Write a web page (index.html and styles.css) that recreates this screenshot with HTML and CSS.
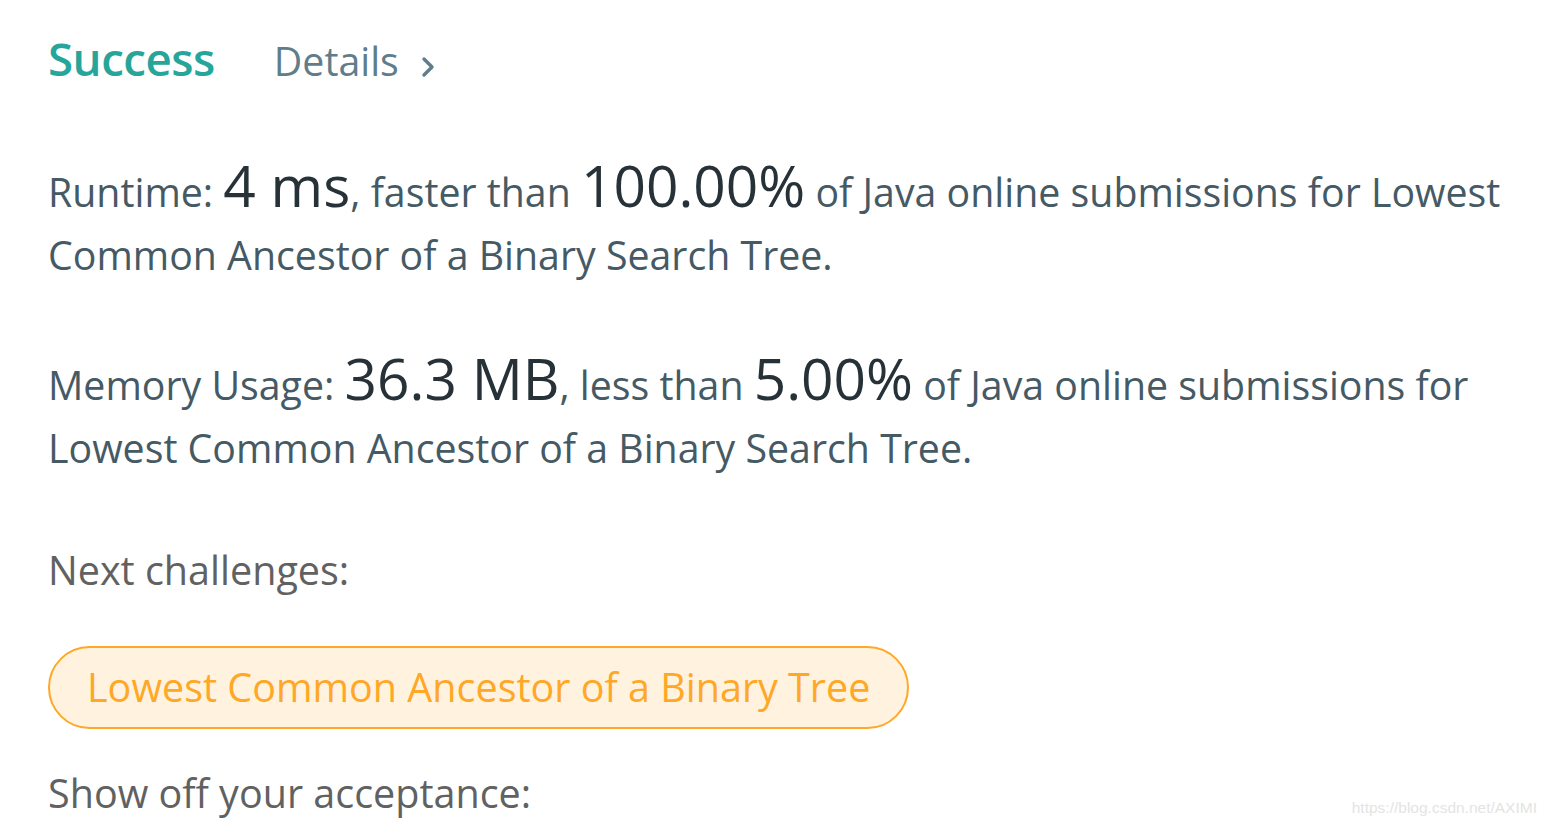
FILE: index.html
```html
<!DOCTYPE html>
<html lang="en">
<head>
<meta charset="utf-8">
<title>Success</title>
<link rel="stylesheet" href="styles.css">
</head>
<body>
<div class="page">
  <div class="result-head">
    <span class="status">Success</span>
    <a class="details" href="#">Details
      <svg class="chev" viewBox="0 0 14 22" width="14" height="22" aria-hidden="true"><path d="M3 3 L11 11 L3 19" fill="none" stroke="currentColor" stroke-width="3.4" stroke-linecap="round" stroke-linejoin="round"/></svg>
    </a>
  </div>

  <p class="stat">Runtime: <span class="big">4 ms</span>, faster than <span class="big">100.00%</span> of Java online submissions for Lowest Common Ancestor of a Binary Search Tree.</p>

  <p class="stat">Memory Usage: <span class="big">36.3 MB</span>, less than <span class="big">5.00%</span> of Java online submissions for Lowest Common Ancestor of a Binary Search Tree.</p>

  <p class="label">Next challenges:</p>
  <div class="challenges">
    <a class="challenge" href="#">Lowest Common Ancestor of a Binary Tree</a>
  </div>

  <p class="label share">Show off your acceptance:</p>
</div>
<div class="watermark">https://blog.csdn.net/AXIMI</div>
</body>
</html>
```

FILE: styles.css
```css
html, body {
  margin: 0;
  padding: 0;
  background: #ffffff;
}

body {
  font-family: "Open Sans", "Noto Sans", sans-serif;
  overflow: hidden;
  height: 825px;
}

.page {
  padding: 27px 0 0 48px;
  width: 1492px;
}

.result-head {
  display: flex;
  align-items: baseline;
  gap: 59px;
  height: 64px;
}

.status {
  font-size: 45.7px;
  font-weight: 600;
  color: #26a69a;
  letter-spacing: -0.5px;
}

.details {
  font-size: 39.3px;
  color: #607d8b;
  text-decoration: none;
  display: inline-flex;
  align-items: baseline;
  gap: 22px;
}

.chev {
  width: 14px;
  height: 22px;
  position: relative;
  top: 2px;
}

.stat {
  margin: 0;
  font-size: 39.3px;
  line-height: 63px;
  color: #455a64;
}

.stat + .stat {
  margin-top: 63px;
}

.result-head + .stat {
  margin-top: 66px;
}

.big {
  font-size: 56.8px;
  line-height: 1;
  color: #263238;
}

.label {
  margin: 0;
  font-size: 39.5px;
  color: #616161;
  line-height: 63px;
}

.stat + .label {
  margin-top: 59px;
}

.challenges {
  margin-top: 44px;
  display: flex;
}

.challenge {
  display: inline-block;
  box-sizing: border-box;
  height: 83px;
  line-height: 79px;
  padding: 0 37px;
  border: 2px solid #ffa726;
  border-radius: 42px;
  background: #fff3e0;
  color: #ffa726;
  font-size: 39.5px;
  text-decoration: none;
}

.share {
  margin-top: 33px;
}

.watermark {
  position: absolute;
  right: 9px;
  bottom: 8px;
  font-family: "Liberation Sans", Arial, sans-serif;
  font-size: 15.5px;
  color: #e4e4e4;
}
```
